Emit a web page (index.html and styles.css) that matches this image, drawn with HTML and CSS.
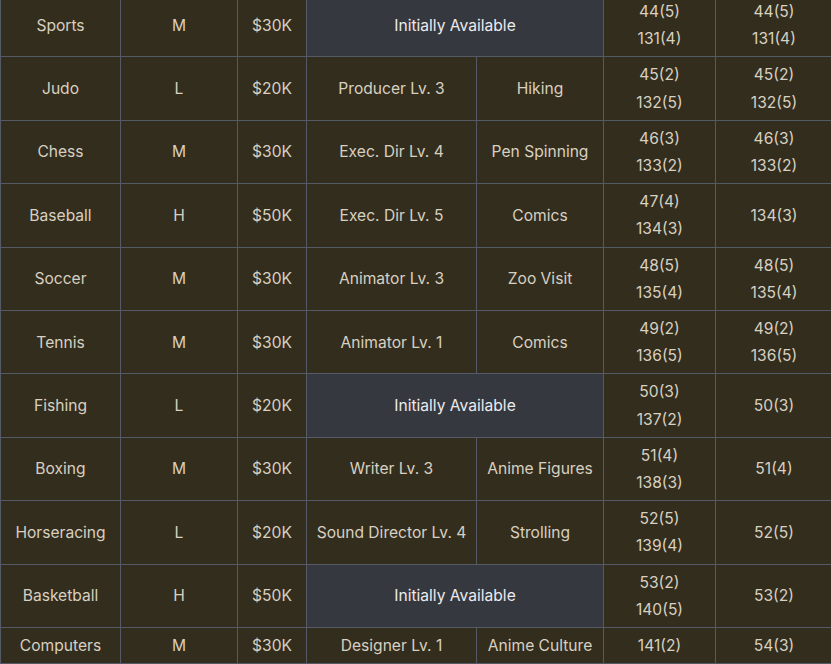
FILE: index.html
```html
<!DOCTYPE html>
<html>
<head>
<meta charset="utf-8">
<link rel="stylesheet" href="styles.css">
</head>
<body>
<table class="hobbies">
<colgroup>
<col class="c1"><col class="c2"><col class="c3"><col class="c4"><col class="c5"><col class="c6"><col class="c7">
</colgroup>
<tbody>
<tr><td>Sports</td><td>M</td><td>$30K</td><td class="init" colspan="2">Initially Available</td><td>44(5)<br>131(4)</td><td>44(5)<br>131(4)</td></tr>
<tr><td>Judo</td><td>L</td><td>$20K</td><td>Producer Lv. 3</td><td>Hiking</td><td>45(2)<br>132(5)</td><td>45(2)<br>132(5)</td></tr>
<tr><td>Chess</td><td>M</td><td>$30K</td><td>Exec. Dir Lv. 4</td><td>Pen Spinning</td><td>46(3)<br>133(2)</td><td>46(3)<br>133(2)</td></tr>
<tr><td>Baseball</td><td>H</td><td>$50K</td><td>Exec. Dir Lv. 5</td><td>Comics</td><td>47(4)<br>134(3)</td><td>134(3)</td></tr>
<tr><td>Soccer</td><td>M</td><td>$30K</td><td>Animator Lv. 3</td><td>Zoo Visit</td><td>48(5)<br>135(4)</td><td>48(5)<br>135(4)</td></tr>
<tr><td>Tennis</td><td>M</td><td>$30K</td><td>Animator Lv. 1</td><td>Comics</td><td>49(2)<br>136(5)</td><td>49(2)<br>136(5)</td></tr>
<tr><td>Fishing</td><td>L</td><td>$20K</td><td class="init" colspan="2">Initially Available</td><td>50(3)<br>137(2)</td><td>50(3)</td></tr>
<tr><td>Boxing</td><td>M</td><td>$30K</td><td>Writer Lv. 3</td><td>Anime Figures</td><td>51(4)<br>138(3)</td><td>51(4)</td></tr>
<tr><td>Horseracing</td><td>L</td><td>$20K</td><td>Sound Director Lv. 4</td><td>Strolling</td><td>52(5)<br>139(4)</td><td>52(5)</td></tr>
<tr><td>Basketball</td><td>H</td><td>$50K</td><td class="init" colspan="2">Initially Available</td><td>53(2)<br>140(5)</td><td>53(2)</td></tr>
<tr><td>Computers</td><td>M</td><td>$30K</td><td>Designer Lv. 1</td><td>Anime Culture</td><td>141(2)</td><td>54(3)</td></tr>
</tbody>
</table>
</body>
</html>
```

FILE: styles.css
```css
html, body {
  margin: 0;
  padding: 0;
  background: #332d1e;
}

body {
  overflow: hidden;
  font-family: "Inter", "Noto Sans", sans-serif;
  font-size: 15.6px;
  color: #d8d0c0;
}

.hobbies {
  margin-top: -7px;
  width: 832px;
  border-collapse: collapse;
  table-layout: fixed;
  background: #332d1e;
}

.c1 { width: 120px; }
.c2 { width: 117px; }
.c3 { width: 69px; }
.c4 { width: 170px; }
.c5 { width: 127px; }
.c6 { width: 112px; }
.c7 { width: 117px; }

.hobbies td {
  border: 1px solid #545a66;
  padding: 4px 2px;
  line-height: 27.2px;
  text-align: center;
  vertical-align: middle;
  white-space: nowrap;
}

.hobbies td.init {
  background: #35383e;
  color: #ebebee;
}
```
